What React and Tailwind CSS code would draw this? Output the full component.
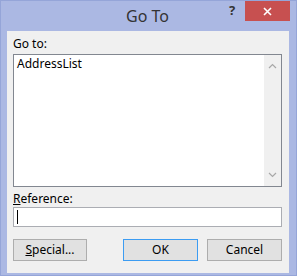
import React from 'react';

const font = { fontFamily: '"Noto Sans", "Open Sans", sans-serif' };

function Chevron({ up }) {
    return (
        <svg width="9" height="6" viewBox="0 0 9 6" className="block">
            <path
                d={up ? "M1 5 L4.5 1.5 L8 5" : "M1 1 L4.5 4.5 L8 1"}
                fill="none"
                stroke="#a8a8a8"
                strokeWidth="1.2"
            />
        </svg>
    );
}

export default function App() {
    return (
        <div className="w-[297px] h-[276px] bg-white" style={font}>
            <div className="w-[297px] h-[276px] bg-[#abb8e3] border border-[#95a5d8] flex flex-col">
                {/* Title bar */}
                <div className="relative h-[30px] flex items-center justify-center shrink-0">
                    <span className="text-[16px] font-normal text-[#333] leading-none ml-[-2px]">Go To</span>
                    <span className="absolute left-[228px] top-[3px] text-[13px] font-bold text-[#333] leading-none">?</span>
                    <div className="absolute left-[244px] top-0 w-[45px] h-[20px] bg-[#c75050] flex items-center justify-center">
                        <svg width="9" height="9" viewBox="0 0 9 9">
                            <path d="M1 1 L8 8 M8 1 L1 8" stroke="white" strokeWidth="1.6" />
                        </svg>
                    </div>
                </div>

                {/* Client area */}
                <div className="ml-[6px] w-[282px] h-[242px] bg-[#f0f0f0] flex flex-col pl-[6px] pr-[7px] text-[12px] text-black">
                    <div className="h-[23px] pt-[5px] leading-[16px]">Go to:</div>
                    <div className="h-[133px] border border-[#828790] bg-white flex">
                        <div className="flex-1 pl-[3px] pt-[1px] leading-[16px]">AddressList</div>
                        <div className="w-[17px] bg-[#f0f0f0] flex flex-col items-center justify-between py-[8px]">
                            <Chevron up />
                            <Chevron />
                        </div>
                    </div>
                    <div className="h-[20px] pt-[4px] leading-[16px]">
                        <span className="underline">R</span>eference:
                    </div>
                    <div className="h-[20px] border border-[#abadb3] bg-white flex items-center pl-[3px]">
                        <div className="w-[1px] h-[14px] bg-black" />
                    </div>
                    <div className="mt-[12px] flex h-[22px]">
                        <button className="w-[74px] h-[22px] bg-[#e1e1e1] border border-[#adadad] leading-none">
                            <span className="underline">S</span>pecial...
                        </button>
                        <button className="ml-[36px] w-[75px] h-[22px] bg-[#e1e1e1] border border-[#3c9cf2] leading-none">
                            OK
                        </button>
                        <button className="ml-[9px] w-[75px] h-[22px] bg-[#e1e1e1] border border-[#adadad] leading-none">
                            Cancel
                        </button>
                    </div>
                </div>
            </div>
        </div>
    );
}
